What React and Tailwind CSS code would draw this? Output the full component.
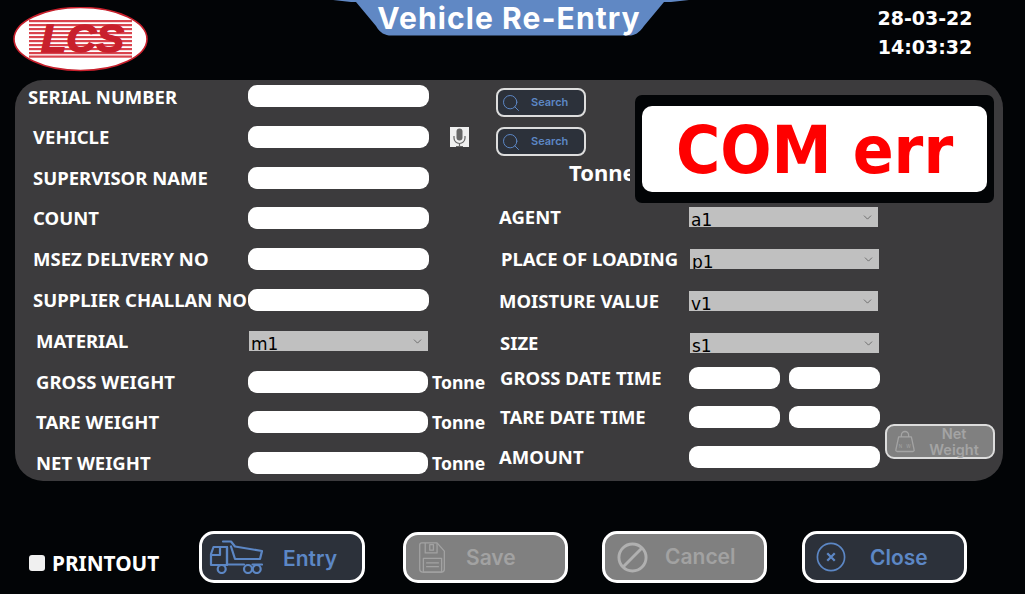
import { ChevronDown, Search } from 'lucide-react'

const labelFont = "font-['Noto_Sans',sans-serif] font-bold text-white"
const btnFont = "font-['Inter',sans-serif] font-semibold"

function Field({ className = '' }) {
  return <input type="text" className={`h-[22px] bg-white rounded-[9px] outline-none ${className}`} />
}

function Choice({ value, className = '' }) {
  return (
    <div className={`relative h-[20px] shrink-0 ${className}`}>
      <select
        defaultValue={value}
        className="block w-full h-[20px] appearance-none bg-[#c0c0c0] pl-[2px] pt-[3px] text-[#000] text-[17px] leading-[20px] font-['DejaVu_Sans',sans-serif] outline-none"
      >
        <option value={value}>{value}</option>
      </select>
      <ChevronDown size={13} strokeWidth={1.2} className="absolute right-[4px] top-[4px] text-[#444] pointer-events-none" />
    </div>
  )
}

function LogoMark() {
  const stripes = [13, 17, 21, 25, 29, 33, 37, 41, 45, 48.5]
  return (
    <svg width="136" height="65" viewBox="0 0 136 65">
      <ellipse cx="67.500" cy="32" rx="66.500" ry="31.500" fill="#fff" stroke="#c8202c" strokeWidth="1.600" />
      {stripes.map((y) => (
        <rect key={y} x="16" y={y} width="103" height="2.200" fill="#d9434d" />
      ))}
      <text x="28" y="45" textLength="83" lengthAdjust="spacingAndGlyphs" fontFamily="Liberation Sans" fontWeight="700" fontStyle="italic" fontSize="38" fill="#c8202c" stroke="#c8202c" strokeWidth="1.400">
        LCS
      </text>
    </svg>
  )
}

function Banner() {
  return (
    <div className="relative w-[357px] h-[36px] flex justify-center pr-[5px]">
      <svg className="absolute inset-0" width="357" height="36" viewBox="0 0 357 36">
        <path d="M0 0H356L338 2H331L311 26C306 33 302 35.500 296 35.500H58C52 35.500 47 33 43 26L23 2H18Z" fill="#6088c4" />
      </svg>
      <span className="relative text-white text-[30px] leading-[36px] tracking-[1.1px] font-['Inter',sans-serif] font-bold">Vehicle Re-Entry</span>
    </div>
  )
}

function MicIcon() {
  return (
    <div className="ml-[21px] w-[19px] h-[20px] bg-[#f0f0f0] flex items-center justify-center">
      <svg width="15" height="19" viewBox="0 0 15 19" fill="none">
        <rect x="4.500" y="0.500" width="6" height="12" rx="3" fill="#666" />
        <path d="M2 8V10A5.500 5.500 0 0 0 13 10V8M7.500 15.500V18M4 18.500H11" stroke="#666" strokeWidth="1.200" />
      </svg>
    </div>
  )
}

function SearchButton({ className = '' }) {
  return (
    <button className={`w-[90px] h-[29px] flex items-center bg-[#2c313a] border-2 border-[#dddddd] rounded-[8px] pl-[3px] ${className}`}>
      <Search size={20} strokeWidth={1.2} className="text-[#5c87c5]" />
      <span className={`ml-[10px] text-[11px] text-[#5c87c5] ${btnFont}`}>Search</span>
    </button>
  )
}

function TruckIcon() {
  return (
    <svg width="54" height="34" viewBox="0 0 54 34" fill="none" stroke="#5c87c5" strokeWidth="2.200" strokeLinejoin="round" strokeLinecap="round">
      <path d="M14 1.500H22L26 6.500L53 11L51 19H26L22 6.500" />
      <path d="M8.500 25H2V14L4.500 7H18V25H8.500M18 24.500H35M43.500 24.500H53" />
      <path d="M3 15H11V7M18 25V7" />
      <circle cx="12.700" cy="29" r="4" />
      <circle cx="39" cy="29" r="4" />
      <circle cx="47.700" cy="29" r="4" />
    </svg>
  )
}

function SaveIcon() {
  return (
    <svg width="29" height="31" viewBox="0 0 30 34" fill="none" stroke="#a2a2a2" strokeWidth="1.400" strokeLinejoin="round">
      <path d="M3 1H20L28 10V30A3 3 0 0 1 25 33H4A3 3 0 0 1 1 30V3A2 2 0 0 1 3 1Z" />
      <path d="M7 1V12H20V1M12 3H16V9H12Z" />
      <path d="M5 18H25V33H5ZM8 23H22M8 27H22" />
    </svg>
  )
}

function CancelIcon() {
  return (
    <svg width="31" height="31" viewBox="0 0 32 32" fill="none" stroke="#b0b0b0" strokeWidth="3">
      <circle cx="16" cy="16" r="14" />
      <path d="M26 6L6 26" />
    </svg>
  )
}

function CloseIcon() {
  return (
    <svg width="30" height="30" viewBox="0 0 32 32" fill="none" stroke="#5c87c5">
      <circle cx="16" cy="16" r="14.500" strokeWidth="1.800" />
      <path d="M12 12L20 20M20 12L12 20" strokeWidth="2.400" />
    </svg>
  )
}

function WeightIcon() {
  return (
    <svg width="20" height="23" viewBox="0 0 22 24" fill="none" stroke="#a4a4a4" strokeWidth="1.400" strokeLinejoin="round">
      <path d="M7 7V5A4 4 0 0 1 15 5V7" />
      <path d="M4 7H18L21 21A1.500 1.500 0 0 1 19.500 23H2.500A1.500 1.500 0 0 1 1 21Z" />
      <text x="4" y="19" fontSize="5" stroke="none" fill="#a4a4a4" fontFamily="Inter">N</text>
      <text x="12.500" y="19" fontSize="5" stroke="none" fill="#a4a4a4" fontFamily="Inter">W</text>
    </svg>
  )
}

function ActionButton({ icon, label, disabled, className = '', textClass = '' }) {
  return (
    <button
      className={`h-[52px] flex items-center border-[3px] border-white rounded-[15px] ${disabled ? 'bg-[#808080] text-[#a2a2a2]' : 'bg-[#2c313a] text-[#5c87c5]'} ${className}`}
    >
      {icon}
      <span className={`text-[21px] ${btnFont} ${textClass}`}>{label}</span>
    </button>
  )
}

export default function App() {
  return (
    <div className="w-[1025px] h-[594px] bg-[#020406] overflow-hidden">
      <header className="h-[80px] flex items-start">
        <div className="w-[333px] pl-[13px] pt-[7px]">
          <LogoMark />
        </div>
        <Banner />
        <div className="flex-1 pl-[135px] pt-[4px] text-center text-[19px] leading-[29px] font-['DejaVu_Sans',sans-serif] font-bold text-white">
          <div>28-03-22</div>
          <div>14:03:32</div>
        </div>
      </header>

      <main className="relative mx-[15px] w-[988px] h-[401px] bg-[#3c3b3d] rounded-[28px] flex text-[18.5px]">
        {/* left column */}
        <div className={`w-[233px] shrink-0 pt-[6px] leading-[22px] whitespace-nowrap ${labelFont}`}>
          <div className="pl-[13px] h-[22px]">SERIAL NUMBER</div>
          <div className="pl-[18px] h-[22px] mt-[18px]">VEHICLE</div>
          <div className="pl-[18px] h-[22px] mt-[19px]">SUPERVISOR NAME</div>
          <div className="pl-[18px] h-[22px] mt-[18px]">COUNT</div>
          <div className="pl-[18px] h-[22px] mt-[19px]">MSEZ DELIVERY NO</div>
          <div className="pl-[18px] h-[22px] mt-[19px]">SUPPLIER CHALLAN NO</div>
          <div className="pl-[21px] h-[22px] mt-[19px]">MATERIAL</div>
          <div className="pl-[21px] h-[22px] mt-[19px]">GROSS WEIGHT</div>
          <div className="pl-[21px] h-[22px] mt-[18px]">TARE WEIGHT</div>
          <div className="pl-[21px] h-[22px] mt-[19px]">NET WEIGHT</div>
        </div>

        {/* inputs next to the labels */}
        <div className="w-[248px] shrink-0 pt-[5px]">
          <Field className="block w-[181px]" />
          <div className="flex items-center mt-[19px]">
            <Field className="w-[181px]" />
            <MicIcon />
          </div>
          <Field className="block w-[181px] mt-[19px]" />
          <Field className="block w-[181px] mt-[18px]" />
          <Field className="block w-[181px] mt-[19px]" />
          <Field className="block w-[181px] mt-[19px]" />
          <div className="h-[22px] mt-[19px] flex items-center">
            <Choice value="m1" className="w-[179px] ml-[1px]" />
          </div>
          <div className="flex items-center h-[22px] mt-[19px]">
            <Field className="w-[180px]" />
            <span className={`ml-[4px] text-[17.6px] ${labelFont}`}>Tonne</span>
          </div>
          <div className="flex items-center h-[22px] mt-[18px]">
            <Field className="w-[180px]" />
            <span className={`ml-[4px] text-[17.6px] ${labelFont}`}>Tonne</span>
          </div>
          <div className="flex items-center h-[22px] mt-[19px]">
            <Field className="w-[180px]" />
            <span className={`ml-[4px] text-[17.6px] ${labelFont}`}>Tonne</span>
          </div>
        </div>

        {/* right column */}
        <div className="flex-1 pt-[8px] whitespace-nowrap">
          <SearchButton />
          <SearchButton className="mt-[10px]" />
          <div className={`mt-[4px] pl-[73px] w-[134px] overflow-hidden h-[24px] leading-[24px] text-[22px] ${labelFont}`}>Tonne</div>
          <div className="flex items-center h-[20px] mt-[23px]">
            <span className={`w-[193px] pl-[3px] ${labelFont}`}>AGENT</span>
            <Choice value="a1" className="w-[189px]" />
          </div>
          <div className="flex items-center h-[20px] mt-[22px]">
            <span className={`w-[194px] pl-[5px] ${labelFont}`}>PLACE OF LOADING</span>
            <Choice value="p1" className="w-[189px]" />
          </div>
          <div className="flex items-center h-[20px] mt-[22px]">
            <span className={`w-[193px] pl-[3px] ${labelFont}`}>MOISTURE VALUE</span>
            <Choice value="v1" className="w-[189px]" />
          </div>
          <div className="flex items-center h-[20px] mt-[22px]">
            <span className={`w-[194px] pl-[4px] ${labelFont}`}>SIZE</span>
            <Choice value="s1" className="w-[189px]" />
          </div>
          <div className="flex items-center h-[22px] mt-[14px]">
            <span className={`w-[193px] pl-[4px] ${labelFont}`}>GROSS DATE TIME</span>
            <Field className="w-[91px]" />
            <Field className="w-[91px] ml-[9px]" />
          </div>
          <div className="flex items-center h-[22px] mt-[17px]">
            <span className={`w-[193px] pl-[4px] ${labelFont}`}>TARE DATE TIME</span>
            <Field className="w-[91px]" />
            <Field className="w-[91px] ml-[9px]" />
          </div>
          <div className="flex items-start h-[22px] mt-[18px]">
            <span className={`w-[193px] pl-[3px] leading-[22px] ${labelFont}`}>AMOUNT</span>
            <Field className="w-[191px]" />
            <button className="ml-[5px] -mt-[22px] w-[110px] h-[35px] shrink-0 flex items-center bg-[#808080] border-2 border-[#dddddd] rounded-[9px] pl-[8px]">
              <WeightIcon />
              <span className={`flex-1 text-center text-[14.5px] leading-[16px] text-[#a4a4a4] ${btnFont}`}>
                Net<br />Weight
              </span>
            </button>
          </div>
        </div>

        {/* COM status overlay */}
        <div className="absolute left-[620px] top-[15px] w-[359px] h-[108px] bg-[#020406] rounded-[7px] px-[7px] pt-[11px]">
          <div className="h-[86px] bg-white rounded-[10px] flex items-center justify-center">
            <span className="mt-[4px] text-[#ff0000] text-[66px] leading-none font-bold font-['DejaVu_Sans',sans-serif] scale-x-[0.915] whitespace-nowrap">COM err</span>
          </div>
        </div>
      </main>

      <footer className="flex items-start pt-[50px]">
        <label className={`flex items-center w-[199px] pl-[29px] pt-[21px] text-[20.8px] leading-[22px] ${labelFont}`}>
          <input type="checkbox" className="w-[16px] h-[16px] appearance-none bg-[#f0f0f0] rounded-[3px]" />
          <span className="ml-[7px]">PRINTOUT</span>
        </label>
        <ActionButton icon={<span className="ml-[7px] mr-[20px] flex"><TruckIcon /></span>} label="Entry" className="w-[166px]" textClass="mt-[3px]" />
        <ActionButton disabled icon={<span className="ml-[12px] mr-[19px] flex"><SaveIcon /></span>} label="Save" className="w-[165px] ml-[38px] mt-[1px] !h-[51px]" />
        <ActionButton disabled icon={<span className="ml-[12px] mr-[17px] flex"><CancelIcon /></span>} label="Cancel" className="w-[165px] ml-[34px]" />
        <ActionButton icon={<span className="ml-[11px] mr-[24px] flex"><CloseIcon /></span>} label="Close" className="w-[165px] ml-[35px]" textClass="mt-[2px]" />
      </footer>
    </div>
  )
}
